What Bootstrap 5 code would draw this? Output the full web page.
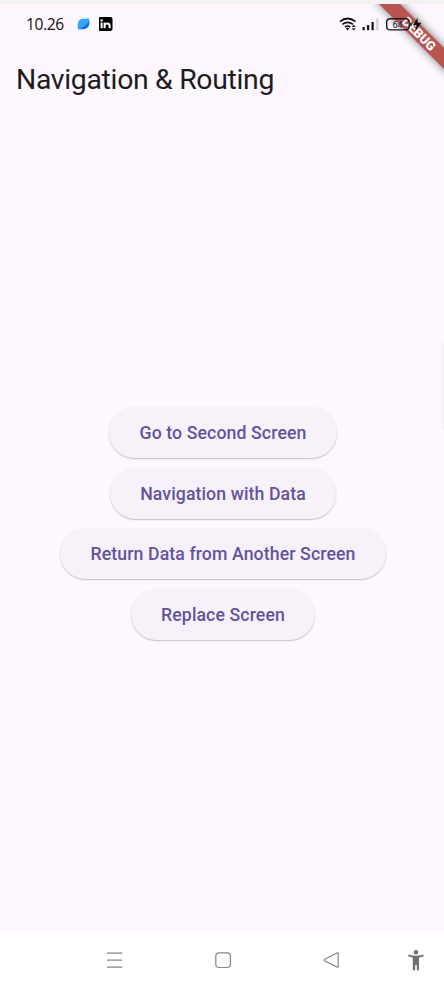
<!DOCTYPE html>
<html lang="en">
<head>
<meta charset="utf-8">
<meta name="viewport" content="width=device-width, initial-scale=1">
<title>Navigation &amp; Routing</title>
<link href="https://cdn.jsdelivr.net/npm/bootstrap@5.3.0/dist/css/bootstrap.min.css" rel="stylesheet">
<style>
body{font-family:Roboto,sans-serif;background:#fef7ff;color:#1d1b20}
.screen{height:986px;width:444px;border-top:4px solid #f1f2f1}
.status-bar{height:40px;padding-left:26px}
.clock{font:400 15.6px/20px "Open Sans",sans-serif;color:#111;width:50.5px;letter-spacing:-.4px}
.app-title{font-size:28.4px;line-height:36px;font-weight:400;padding:18px 16px 0;height:60px;letter-spacing:-.32px}
.actions{gap:9.6px;padding-top:11px;padding-left:2px}
.btn-tonal{--bs-btn-color:#65529f;--bs-btn-bg:#f7f2fa;--bs-btn-border-width:0;--bs-btn-font-weight:500;--bs-btn-font-size:17.7px;--bs-btn-padding-x:30.4px;--bs-btn-padding-y:0;padding-top:1.6px;height:51px;letter-spacing:.1px;box-shadow:0 1px 2px rgba(0,0,0,.13),0 1px 1px rgba(0,0,0,.11)}
.system-nav{height:54px}
.ribbon{right:0;top:4px;z-index:1}
.status-icons{right:20px;top:14px;z-index:2}
.edge-handle{right:0;top:343px;width:2px;height:88px;background:#f3eff4;border-left:1px solid #f6f0f7;border-radius:2px 0 0 2px}
</style>
</head>
<body>
<div class="screen d-flex flex-column position-relative overflow-hidden">
  <header class="status-bar d-flex align-items-center">
    <span class="clock">10.26</span>
    <svg width="14" height="14" viewBox="0 0 14 14"><rect width="13.5" height="14" rx="3" fill="#f3f2f5"/><path d="M1.4 12.6Q.2 10 1 6 2 1.6 6.5 1.7 9 1.9 11.7 1.2 12.7 3.5 12.2 6.5 11.5 11.6 6.6 12.2 4 12.3 1.4 12.6Z" fill="#35a5fa"/><path d="M3.4 11.6Q8.5 9.5 12.3 4.5 12.6 9 10 10.8 7 12.8 3.4 11.6Z" fill="#1765ea"/></svg>
    <svg class="ms-2" width="14" height="14" viewBox="0 0 14 14"><rect x="-.5" width="14" height="14" rx="2" fill="#000"/><path d="M2.6 5.6v5.6M5.6 11.2V5.6M5.6 8.2Q6 6.4 8 6.4 10.6 6.4 10.6 8.5V11.2" fill="none" stroke="#fff" stroke-width="2"/><circle cx="2.6" cy="3.4" r="1.2" fill="#fff"/></svg>
  </header>
  <h1 class="app-title m-0">Navigation &amp; Routing</h1>
  <main class="actions flex-grow-1 d-flex flex-column align-items-center justify-content-center">
    <button class="btn btn-tonal rounded-pill" type="button">Go to Second Screen</button>
    <button class="btn btn-tonal rounded-pill" type="button">Navigation with Data</button>
    <button class="btn btn-tonal rounded-pill" type="button">Return Data from Another Screen</button>
    <button class="btn btn-tonal rounded-pill" type="button">Replace Screen</button>
  </main>
  <footer class="system-nav bg-white flex-shrink-0">
    <svg class="d-block" width="444" height="54" viewBox="0 932 444 54" fill="none" stroke="#858585" stroke-width="1.2"><path d="M107 953.2h15.3M107 960.2h15.3M107 967.2h15.3"/><rect x="215.8" y="952.9" width="14.6" height="14.6" rx="3.2"/><path d="M324.8 959.3 336.8 953Q338.2 952.5 338.2 954V966Q338.2 967.5 336.8 966.9L324.8 961Q323.6 960.2 324.8 959.3Z"/><g fill="#707070" stroke="none"><circle cx="416" cy="952.3" r="2.2"/><path d="M408.5 954.5Q416 957 423.3 954.5L423.8 956.2 419 957.8V970.2H416.8V965H415.2V970.2H412.8V957.8L408 956.2Z"/></g></svg>
  </footer>
</div>
<svg class="ribbon position-absolute" width="90" height="90" viewBox="354 4 90 90">
  <defs><filter id="soft" x="-30%" y="-30%" width="160%" height="160%"><feGaussianBlur stdDeviation="4"/></filter></defs>
  <path d="M374 -1 396 -1 454 57 454 79Z" fill="#000" opacity=".5" filter="url(#soft)"/>
  <path d="M379 4H400L444 48V69Z" fill="#b95550"/>
  <text transform="translate(419 34) rotate(45)" x="0" y="4.5" text-anchor="middle" font-family="Roboto" font-weight="900" font-size="12.9" fill="#fff">DEBUG</text>
</svg>
<svg class="status-icons position-absolute" width="86" height="20" viewBox="338 14 86 20">
  <g fill="none" stroke="#111" stroke-width="1.7"><path d="M340 21.7Q347.7 15.3 355.4 21.7M342.4 24.4Q347.7 20.2 353 24.4M345 27Q347.7 25 350.3 27"/></g>
  <path d="M345.8 28.5Q347.7 27 349.3 28.5L347.6 30.5ZM351.7 26.9 353.7 24.7 355.7 26.9ZM351.7 28.3 353.7 30.5 355.7 28.3Z" fill="#111"/>
  <g fill="#111"><rect x="362.5" y="27" width="2.2" height="3.3" rx=".6"/><rect x="367" y="25" width="2.2" height="5.3" rx=".6"/><rect x="371.5" y="22" width="2.2" height="8.3" rx=".6"/><rect x="376.2" y="18.3" width="2.2" height="12" rx=".6" fill="#d5d0d6"/></g>
  <rect x="386.7" y="18.7" width="22.5" height="11.2" rx="3.4" fill="none" stroke="#1b1718" stroke-width="1.4"/><path d="M411 22.5v3.5" stroke="#1b1718" stroke-width="1.5"/>
  <text x="397.5" y="27.5" text-anchor="middle" font-family="Roboto" font-size="9" fill="#222">64</text>
  <path d="M417.8 17.5 412.8 25.2H416.5L415.3 31 421.5 22.8H417.3Z" fill="#111"/>
</svg>
<div class="edge-handle position-absolute"></div>
<script src="https://cdn.jsdelivr.net/npm/bootstrap@5.3.0/dist/js/bootstrap.bundle.min.js"></script>
</body>
</html>
